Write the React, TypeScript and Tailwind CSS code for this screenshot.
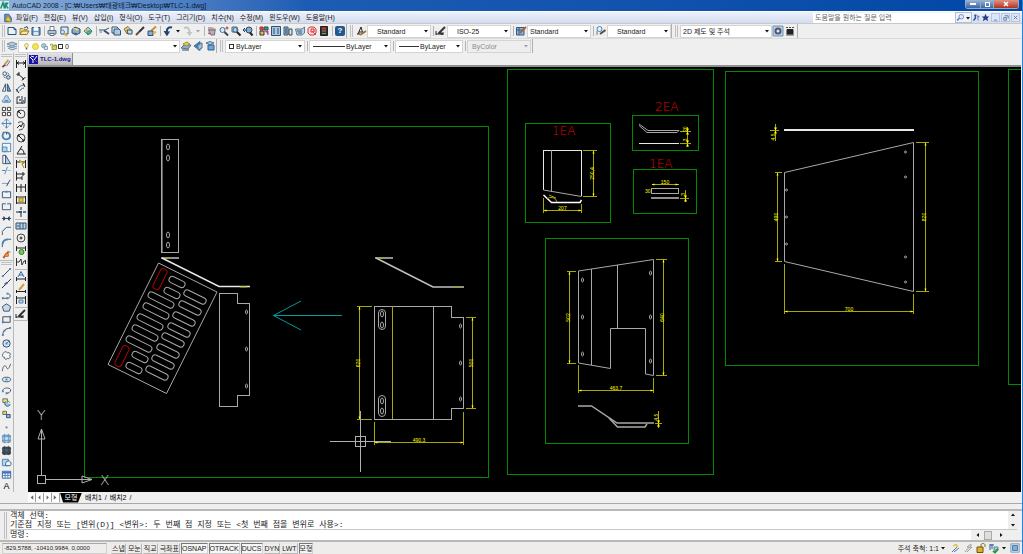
import React from 'react';

const NAVY = '#33506e';
const BLUE = '#4a83b5';
const PALE = '#b9d4ea';
const DARK = '#333333';
const GOLD = '#e0b040';

// Short helper for the small toolbar drawings: path, stroke, fill, stroke width
const p = (d: string, stroke: string = DARK, fill: string = 'none', width: number = 1) => (
  <path key={d + stroke + fill} d={d} stroke={stroke} fill={fill} strokeWidth={width} />
);

const icons: Record<string, React.ReactNode[]> = {
  // Standard toolbar
  New: [p('M2 2.5H8L10 4.5V9.5H2z', NAVY, '#e6f2fb'), p('M8 2.5V4.5H10', NAVY)],
  Open: [p('M2 3.5H5L6 4.5H9V9.5H2z', '#a58a30', '#f5dd7a'), p('M2 9.5L4 6H11L9 9.5z', '#8a7430', '#fbe9a0'), p('M6 3L9 1.5L10 4', NAVY)],
  Save: [p('M2 2.5H10V10H2z', NAVY, '#6c9ccb'), p('M4 2.5H8V5.5H4z', '#dfe9f3', '#ffffff'), p('M4 10V7.5H8V10', '#dfe9f3', '#dfe9f3')],
  Plot: [p('M4 5V1.5H8V5', '#6f7e92', '#fff'), p('M2 5.5H10V9H2z', '#5f6f85', '#b4c2d4'), p('M4 8.5H8V10.5H4z', '#5f6f85', '#fff')],
  Preview: [p('M3 2H10V9H3z', NAVY, '#dcecf8'), p('M2.5 7A2 2 0 1 0 6.500 7A2 2 0 1 0 2.500 7z', '#6a7f9c', '#cfe2f2'), p('M6 8.5L9 11', GOLD, 'none', 2)],
  Publish: [p('M2 4.500L5 2L10 4V8L6 10L2 8z', NAVY, '#7fb0d8'), p('M3 3L7 6L9 4', GOLD, '#f6e28c'), p('M4 8L7 9', '#446')],
  Dwf: [p('M2 6L6 2L10 6L6 10z', BLUE, '#a9d2e6'), p('M5 6H10L8 9H5z', '#3a8a60', '#68b48a'), p('M3 4L6 6', GOLD, 'none', 2)],
  Cut: [p('M1 5H7L11 3', NAVY), p('M6 5.500L11 9', NAVY, 'none', 2), p('M1.500 7H4', '#778')],
  Copy: [p('M2 2H7L8.500 3.500V8H2z', NAVY, '#e6f2fb'), p('M4 4H9L10.500 5.500V10H4z', NAVY, '#a9cbe6')],
  Paste: [p('M2 4L6 1.500L9 5L5 9z', '#8b7638', '#e5cc7c'), p('M5 5H10V9H6z', NAVY, '#c6dff2')],
  Match: [p('M2 10L5 7', '#7a4a20', 'none', 2), p('M5 7L10 2', '#333', 'none', 2)],
  BlockEdit: [p('M5 6L10 1.500', '#d98b2b', 'none', 2), p('M2 6H7V10.500H2z', NAVY, '#88aed0'), p('M7 8L10 7', GOLD, 'none', 2)],
  Undo: [p('M10 2.500C6 1.500 4 4 5 10', '#1d4572', 'none', 2), p('M2 6L5 10.500L7.500 6.500', '#1d4572', '#1d4572')],
  Redo: [p('M2 3C6 1.500 8 4 7.500 9', '#c4c4c4', 'none', 2), p('M5 7L7.500 10.500L10 7', '#c4c4c4', '#c4c4c4')],
  Pan: [p('M3 5V2M5 5V2M7 5V2.500M9 6V3.500', '#a2555d'), p('M2.500 5H9L8.500 10H5z', '#5b7590', '#c9a9a2'), p('M2 8L4 9', '#b33')],
  Zoom: [p('M2 5A2.500 2.500 0 1 0 7 5A2.500 2.500 0 1 0 2 5z', '#456a8e', '#d9ebf8'), p('M6.500 7L10 10.500', '#345', 'none', 2), p('M9 1.500V4.500M7.500 3H10.500', '#a33')],
  ZoomWin: [p('M2 2H7V7H2z', '#456a8e', '#bcd3e8'), p('M3 5A2.500 2.500 0 1 0 8 5A2.500 2.500 0 1 0 3 5z', '#456a8e'), p('M7 7L10.500 10.500', '#222', 'none', 2)],
  ZoomPrev: [p('M4 5A3 3 0 1 0 10 5A3 3 0 1 0 4 5z', '#2e4d70', '#86add0'), p('M8 7.500L10.500 10.500', '#222', 'none', 2), p('M1 5H5M3 3L1 5L3 7', '#1d4572')],
  Props: [p('M2 2H5V5H2z', '#a33', '#d45'), p('M6 2H10V5H6z', '#246', '#5aa04a'), p('M2 6H6V10H2z', '#333', '#d9c050'), p('M7 6H10V10', '#a3a', '#b56ab5')],
  Center: [p('M1.500 1.500H10.500V10.500H1.500z', NAVY, '#a7c7e3'), p('M3 4H5M7 4H9M3 6H5M7 6H9M3 8H5M7 8H9', '#274b73', 'none', 1)],
  Palette: [p('M2 2H6V10H2z', NAVY, '#a7c7e3'), p('M3 4H5M3 6H5M3 8H5', '#234'), p('M7 4H10V10H7z', '#345', '#dbe9f4')],
  Sheet: [p('M1.500 4H8L10.500 2V8L8 10H3z', '#5d7b95', '#b8d3e8'), p('M3 6H8M4 8H8', '#3c586f')],
  Markup: [p('M2 3.500L4 2H8L10 4V8L8 10H4L2 8z', '#d33535', '#fbe0e0'), p('M5 4H8V7H5z', '#c33'), p('M6 6L10 10', '#d44')],
  Calc: [p('M2.500 1.500H9.500V10.500H2.500z', '#222', '#333'), p('M4 3.500H8', '#d33', 'none', 2), p('M4 6H8M4 8.500H8', '#7aa06a')],
  TextStyle: [p('M3 9L6 2L8 9M4 7H7', '#222', 'none', 1), p('M5 10L11 6', '#a4753b', 'none', 2), p('M2 9H5', '#222')],
  DimStyle: [p('M1 10V6M1 9H8M8 10V7', '#222'), p('M4 8L10 2', '#333', 'none', 2), p('M3 8H7V10', '#222', '#444')],
  TableStyle: [p('M1.500 2.500H9V10H1.500z', '#2f5b8e', '#8fb7e0'), p('M1.500 5H9M4 2.500V10', '#2f5b8e'), p('M5 8L11 2', '#a06a2b', 'none', 2)],
  LeaderStyle: [p('M2 4A2 2 0 1 0 7 4A2 2 0 1 0 2 4z', BLUE, '#e7f3fb'), p('M2 10V6', BLUE), p('M5 9L10.500 5', '#5b4a34', 'none', 2)],
  Gear: [p('M1 1H11V11H1z', '#6a93bb', '#b6d0e8'), p('M3.500 6A2.500 2.500 0 1 0 8.500 6A2.500 2.500 0 1 0 3.500 6z', '#556', '#dfe6ec', 2)],
  Workspace: [p('M2 2.500H4M5 2.500H7M8 2.500H10M2 10H10', '#555'), p('M3 4.500H9V9H3z', '#222', '#222')],
  // Layers
  Layers: [p('M1 4L6 2L11 4L6 6z', '#7790a8', '#b6cfe3'), p('M1 6L6 8L11 6', '#7790a8', '#9db9d0'), p('M2 8L6 10L11 8', '#7790a8', '#d0e0ec')],
  LayerPrev: [p('M1 8L4 5H11L8 9z', '#53738f', '#8fb0cb'), p('M3 4L7 2L10 4L6 6z', '#a89030', '#e6cd5c'), p('M2 10H9', NAVY)],
  LayerState: [p('M2 6L8 1.500V10.500z', '#3f6d94', '#4d7ea8'), p('M6 5L10 3V8L6 10z', '#53738f', '#a9c8e0')],
  LayerMatch: [p('M2 3L6 1.500L10 3L6 5z', '#53738f', '#a9c8e0'), p('M4 5H10V10H4z', '#2f6096', '#6fa5d5')],
  Bulb: [p('M3.500 4.500A2.500 2.500 0 1 1 8.500 4.500L7 7.500H5z', '#b09a3d', '#fff2a0'), p('M5 9H7', '#666', 'none', 2)],
  Sun: [p('M2 6A4 4 0 1 0 10 6A4 4 0 1 0 2 6z', '#c7b530', '#f4e650')],
  SunVp: [p('M2 5A3 3 0 1 0 8 5A3 3 0 1 0 2 5z', '#6c95a8', '#a9c9cf'), p('M6 6H10V10H6z', '#6c8aa0', '#dbe6ee')],
  LockYellow: [p('M2 5V3H5V5', '#8a8420'), p('M4 5H10V10H4z', '#8a8420', '#dcd84a'), p('M7 4H10V7', '#6a7f30')],
  // Modify
  Erase: [p('M1.500 10L5 7', '#8b3a3a', 'none', 2), p('M4 7L8 2', '#c8a050', 'none', 2), p('M6 9L10 3', '#3a6fa0', 'none', 1)],
  CopyObj: [p('M2 4A2 2 0 1 0 6 4A2 2 0 1 0 2 4z', NAVY), p('M6 8A2 2 0 1 0 10 8A2 2 0 1 0 6 8z', NAVY, PALE), p('M7 3L9 5M3 7L5 9', NAVY)],
  Mirror: [p('M5 2V10H1.500z', NAVY, '#fff'), p('M7 2V10H10.500z', NAVY, '#6f9fca')],
  Offset: [p('M2 9C0 6 4 6 4 4C4 1 8 1 8 4C8 6 12 6 10 9z', BLUE, PALE), p('M4 7.500H8', NAVY)],
  Array: [p('M1.500 1.500H5V5H1.500zM7 1.500H10.500V5H7zM1.500 7H5V10.500H1.500zM7 7H10.500V10.500H7z', DARK, '#fff')],
  Move: [p('M6 1V11M1 6H11', BLUE, 'none', 1), p('M4 3L6 1L8 3M4 9L6 11L8 9M3 4L1 6L3 8M9 4L11 6L9 8', BLUE)],
  Rotate: [p('M3 3C0 7 3 11 7 10C11 9 11 3 6 2.500', BLUE, 'none', 2), p('M2 2.500H6V5', NAVY)],
  Scale: [p('M1.500 1.500H10.500V10.500H1.500z', BLUE, '#eef6fc'), p('M1.500 5.500H6.500V10.500H1.500z', BLUE, PALE)],
  Stretch: [p('M2 1.500H5V10.500H2z', NAVY, '#fff'), p('M5 1.500L10.500 10.500H5z', NAVY, PALE)],
  Trim: [p('M1 6H5', BLUE), p('M7 6H11', '#8bb', 'none', 1), p('M4 10L7 2', '#5b87b0')],
  Extend: [p('M1 7H7', '#6a9ccc'), p('M7 7H8M6 10L10 3', '#345')],
  Break1: [p('M1.500 3H10.500V9.500H1.500z', NAVY, '#eef3f8'), p('M5 3H7', BLUE, 'none', 2)],
  Break2: [p('M4 3H1.500V9.500H10.500V3H8', NAVY), p('M4 3H5M7 3H8', BLUE, 'none', 2)],
  Join: [p('M1 6H11', '#345'), p('M3 4L5 6L3 8zM9 4L7 6L9 8z', '#345', '#345')],
  Chamfer: [p('M1.500 11V7L6 2.500H11', '#456'), p('M1.500 7L6 2.500', BLUE, 'none', 1)],
  Fillet: [p('M1.500 11V8C2 4 4 2.500 8 2.500H11', NAVY, 'none', 1), p('M1.500 8C2 4 4 2.500 8 2.500', BLUE, 'none', 2)],
  Explode: [p('M3 9L8 3', '#d33', 'none', 2), p('M5 5H8V8H4z', '#c60', '#f5a050'), p('M8 2L10 4M2 9L4 10', '#555')],
  // Draw
  Line: [p('M2 10L10 2', '#345'), p('M1 9H3V11H1zM9 1H11V3H9z', BLUE, BLUE, 0)],
  XLine: [p('M1 11L11 1', '#222'), p('M4 7L7 5', '#36a', 'none', 2)],
  PLine: [p('M2 9H7C11 9 11 4 7 4', '#456', 'none', 1), p('M1 8H3V10H1zM6 3H8V5H6zM6 8H8V10H6z', BLUE, BLUE, 0)],
  Polygon: [p('M6 2L10.500 5L9 10H3L1.500 5z', NAVY, '#c9d9e8')],
  Rect: [p('M2 3H10V9H2z', '#345', '#eee'), p('M1 8H3V10H1zM9 2H11V4H9z', BLUE, BLUE, 0)],
  Arc: [p('M2 10C2 5 5 2.500 10 2.500', '#345'), p('M1 9H3V11H1zM9 1H11V3H9zM3 4H5V6H3z', BLUE, BLUE, 0)],
  Circle: [p('M2 6A4 4 0 1 0 10 6A4 4 0 1 0 2 6z', '#2a4a70', '#cfe0f0'), p('M6 6L9 3', BLUE), p('M5 5H7V7H5z', BLUE, BLUE, 0)],
  RevCloud: [p('M3 3C4 1 6 2 7 3C10 2 11 5 9.500 6C11 9 8 10 7 9C6 11 3 10 4 8C1 8 1 5 3 3z', '#456', '#f6f6f6')],
  Spline: [p('M1.500 10C2 3 5 3 6 6C7 9 9 7 10.500 2', '#555')],
  Ellipse: [p('M1.500 6A4.500 2.500 0 1 0 10.500 6A4.500 2.500 0 1 0 1.500 6z', '#356', '#d7e5f0'), p('M5 5H7V7H5z', BLUE, BLUE, 0)],
  EllipseArc: [p('M2 7C1 3 9 2 10.500 5C11 8 8 9 6 9', '#456'), p('M1 6H3V8H1zM5 8H7V10H5z', BLUE, BLUE, 0)],
  Insert: [p('M2 2H7V6H2z', '#667', '#e8e070'), p('M5 5A3 3 0 1 0 10 8', NAVY, '#9ec4e2'), p('M7 4L10 6', '#3a3')],
  MakeBlock: [p('M2 2.500H6V6H2z', '#665', '#e0d860'), p('M6 6H10V9.500H6z', NAVY, '#8fb7da')],
  Point: [p('M5 6H7V8H5z', BLUE, BLUE, 0)],
  Hatch: [p('M2 2.500H10V10H2z', BLUE, '#cfe4f5'), p('M1 4H11M1 8H11M4 1V11M8 1V11', '#5f93c0')],
  Gradient: [p('M2 2.500H10V10H2z', '#222', '#4b5f73'), p('M1 4H11M1 8H11M4 1V11M8 1V11', '#3a4550')],
  Region: [p('M1.500 2.500H8V9.500H1.500z', BLUE, PALE), p('M5 7A3 3 0 1 1 10 9.500H5z', '#2e5f90', '#e7f2fb')],
  Table: [p('M1.500 2.500H10.500V10H1.500z', '#2f5b9e', '#fff'), p('M1.500 4H10.500', '#3f78c0', 'none', 2), p('M1.500 7H10.500M4.500 4V10M7.500 4V10', '#4c80c0')],
  // Dimension
  DimLinear: [p('M1.500 2V10M10.500 2V10', '#222'), p('M2 5H10M4 3.500L2 5L4 6.500M8 3.500L10 5L8 6.500', '#222')],
  DimAligned: [p('M3 4L9 9M1.500 5L4.500 2M7 10.500L10.500 7', '#222', 'none', 1), p('M3 4H5M3 4V6M9 9H7', '#222')],
  DimArc: [p('M2 10C2 6 5 3 10 3', '#2a6da8', 'none', 1), p('M1 7L4 11M8 1L10 5', '#222'), p('M5 9C5 8 7 6 9 6', '#555')],
  DimOrd: [p('M2 10V3M2 3H5M7 2V10M10 3V9', '#333'), p('M4 5H6V7H4zM8 6H10V8H8z', BLUE, BLUE, 0), p('M2 9H10', '#333')],
  DimRadius: [p('M2 6A4 4 0 1 0 10 6A4 4 0 1 0 2 6z', '#444'), p('M6 6L3 3M3 5V3H5', '#222')],
  DimJog: [p('M3 3C6 0 10 3 9 6C9 9 6 10 4 10', '#444'), p('M2 8L5 5L6 7L8 3', '#222')],
  DimDia: [p('M2 6A4 4 0 1 0 10 6A4 4 0 1 0 2 6z', '#444'), p('M3 3L9 9M3 5V3H5M9 7V9H7', '#222')],
  DimAngular: [p('M7 2L2 10H11', '#222'), p('M5 5C8 5 9 7 9 10', '#222')],
  QDim: [p('M1.500 2V10M10.500 2V10M2 4H10', '#222'), p('M4 2L9 5L7 6L9 10', '#998a10', '#e9df30')],
  DimBase: [p('M1.500 1.500V10.500M1.500 4H10M8 2V6M1.500 8H7M7 6V10', '#222')],
  DimCont: [p('M1.500 2V10M6 2V10M10.500 2V10M1.500 5H10.500', '#222')],
  DimSpace: [p('M1.500 2V10M10.500 2V10M2 3H10M2 9H10', '#222'), p('M4 4H8V8H4z', '#a08820', '#e5c34a')],
  DimBreak: [p('M6 1V4M6 7V11M1 6H4', '#222'), p('M8 6H11', BLUE, 'none', 2), p('M4 5H7V7H4z', '#357', '#357', 0)],
  Tol: [p('M1 3H11V9H1z', NAVY, PALE), p('M5 3V9M8 3V9M2 6H4', NAVY)],
  CenterMark: [p('M2 6A4 4 0 1 0 10 6A4 4 0 1 0 2 6z', '#444'), p('M6 4.500V7.500M4.500 6H7.500', '#222')],
  Inspect: [p('M1.500 2V7M10.500 2V7M2 4H10', '#222'), p('M4 8A2.500 2.500 0 1 0 9 8A2.500 2.500 0 1 0 4 8z', '#2c8020', '#7cc850')],
  JogLine: [p('M1.500 2V10M1.500 6H4L6 3L7 9L9 5H10.500M10.500 4V8', '#333')],
  DimEdit: [p('M3 7L6 1.500L9 7M4 5H8', '#2c6aa6', 'none', 1), p('M1.500 7V11M10.500 7V11M2 9H10', '#222')],
  DimTEdit: [p('M1.500 8V11M10.500 8V11M2 9.500H10', '#222'), p('M4 8L9 2', '#d5a030', 'none', 2)],
  DimUpdate: [p('M1.500 2V10M10.500 2V10M2 4H10', '#222'), p('M4 6H8V9H4z', BLUE, PALE)],
  // Status bar
  AnnoVis: [p('M3 10L9 4M5 10L10 6', '#5279a0', 'none', 1), p('M4 4L7 2L9 5', '#d5b93a', '#f0dc62')],
  AnnoAuto: [p('M3 10L9 3M5 10L10 5', '#9a9a9a', 'none', 1), p('M5 5L9 2V6z', '#aaa', '#ccc')],
  Padlock: [p('M6 5V3C6 1 10 1 10 3V5', '#8a6a10', 'none', 1), p('M2 5H8V10.500H2z', '#6b5210', '#e0b02e')],
  Tray: [p('M2 2V8M4 2V7M2 3H6', '#2e5f90'), p('M6 5H10V8H6z', BLUE, PALE), p('M5 9L7 10.500L10 7', '#2a9a30', 'none', 2)],
  CleanScreen: [p('M1 1H11V11H1z', '#6b8db0', '#dceaf6'), p('M3 3H9V9H3z', '#3c6f9f', '#7fb0dc')],
  Search: [p('M4 5A3 3 0 1 0 10 5A3 3 0 1 0 4 5z', '#5272ab', '#e4edfa'), p('M4.500 7L1.500 10', '#5272ab', 'none', 2)],
  Comm: [p('M3 3H6M4.500 2V7L2 10', '#2c4fa0', 'none', 2), p('M7 5H10M8 3V10', '#3a5fb5')],
  Star: [p('M6 1L7.500 4.500H11L8.500 7L9.500 11L6 8.500L2.500 11L3.500 7L1 4.500H4.500z', '#1f3c88', '#1f3c88', 0)],
  Sketch: [p('M2 1.500H7L10 6V10.500H2z', '#2f5f8f', '#5b93c4'), p('M3 9L6 3L10 10.500z', '#b08818', '#f0cc3a')],
};

const Icon = ({ name, className = 'size-3' }: { name: string; className?: string }) => (
  <svg viewBox="0 0 12 12" className={`${className} shrink-0`} aria-hidden="true">
    {icons[name]}
  </svg>
);

const ToolButton = ({ name }: { name: string }) => (
  <button type="button" aria-label={name} className="flex size-3 shrink-0 items-center justify-center">
    <Icon name={name} />
  </button>
);

const Sep = () => (
  <div className="flex h-full w-1 shrink-0 justify-center py-0.5">
    <div className="w-px bg-[#b4b4b4]" />
  </div>
);

const Grip = ({ wide = false }: { wide?: boolean }) => (
  <div className={`flex h-full shrink-0 justify-center gap-px py-px ${wide ? 'w-[9px] border-l border-[#b0b0b0]' : 'w-1.5'}`}>
    <div className="w-px bg-[#c0c0c0]" />
    <div className="w-px bg-[#c0c0c0]" />
  </div>
);

const Caret = ({ dim = false }: { dim?: boolean }) => (
  <svg viewBox="0 0 6 6" className="size-1.5 shrink-0" aria-hidden="true">
    <path d="M1 2H5L3 4.500z" fill={dim ? '#a0a0a0' : '#111111'} />
  </svg>
);

interface ComboProps {
  label: string;
  value: string;
  className: string;
  disabled?: boolean;
  children?: React.ReactNode;
}

const Combo: React.FC<ComboProps> = ({ label, value, className, disabled, children }) => (
  <div className="relative flex h-[13px] shrink-0 items-center">
    <select
      aria-label={label}
      disabled={disabled}
      className={`h-[13px] appearance-none border border-[#d4d4d4] text-[7px] leading-[11px] ${
        disabled ? 'bg-[#eeeeee] text-[#8c8c8c]' : 'bg-white text-[#222222]'
      } ${className}`}
    >
      <option>{value}</option>
    </select>
    <div className="pointer-events-none absolute inset-y-0 left-1 flex items-center">{children}</div>
    <div className="pointer-events-none absolute inset-y-0 right-0.5 flex items-center">
      <Caret dim={disabled} />
    </div>
  </div>
);

const menus = ['파일(F)', '편집(E)', '뷰(V)', '삽입(I)', '형식(O)', '도구(T)', '그리기(D)', '치수(N)', '수정(M)', '윈도우(W)', '도움말(H)'];

const standardTools = [
  ['New', 'Open', 'Save'],
  ['Plot', 'Preview', 'Publish', 'Dwf'],
  ['Cut', 'Copy', 'Paste', 'Match', 'BlockEdit'],
];
const viewTools = [
  ['Pan', 'Zoom', 'ZoomWin', 'ZoomPrev'],
  ['Props', 'Center', 'Palette', 'Sheet', 'Markup', 'Calc'],
];
const modifyTools = ['Erase', 'CopyObj', 'Mirror', 'Offset', 'Array', 'Move', 'Rotate', 'Scale', 'Stretch', 'Trim', 'Extend', 'Break1', 'Break2', 'Join', 'Chamfer', 'Fillet', 'Explode'];
const drawTools = ['Line', 'XLine', 'PLine', 'Polygon', 'Rect', 'Arc', 'Circle', 'RevCloud', 'Spline', 'Ellipse', 'EllipseArc', 'Insert', 'MakeBlock', 'Point', 'Hatch', 'Gradient', 'Region', 'Table'];
const dimTools = [
  ['DimLinear', 'DimAligned', 'DimArc', 'DimOrd'],
  ['DimRadius', 'DimJog', 'DimDia', 'DimAngular'],
  ['QDim', 'DimBase', 'DimCont', 'DimSpace', 'DimBreak'],
  ['Tol', 'CenterMark', 'Inspect', 'JogLine'],
  ['DimEdit', 'DimTEdit', 'DimUpdate'],
  ['DimStyle'],
];

const TitleBar = () => (
  <div className="flex h-[11px] shrink-0 items-center bg-linear-to-r from-[#8db0da] via-[#1d5cb4] via-30% to-[#0147a6]">
    <svg viewBox="0 0 12 12" className="size-[9px] shrink-0" aria-hidden="true">
      <rect width="12" height="12" fill="#d7efe9" />
      <path d="M1 10L4 2L6 10M7 2V10M7 3H10L8 6L11 10" stroke="#1f8f7a" strokeWidth="2" fill="none" />
    </svg>
    <h1 className="ml-[3px] text-[7px] leading-[10px] whitespace-nowrap text-[#0c1c30]">
      AutoCAD 2008 - [C:₩Users₩태광테크₩Desktop₩TLC-1.dwg]
    </h1>
    <div className="mr-[3px] ml-auto flex h-[9px] self-start overflow-hidden rounded-b-[3px] border border-t-0 border-[#8fa9cc]">
      <button type="button" aria-label="최소화" className="flex w-3.5 items-center justify-center bg-linear-to-b from-[#9fb6d4] to-[#3a66a5]">
        <span className="h-0.5 w-1.5 bg-white" />
      </button>
      <button type="button" aria-label="이전 크기로" className="flex w-3.5 items-center justify-center border-x border-[#8fa9cc] bg-linear-to-b from-[#9fb6d4] to-[#3a66a5]">
        <span className="size-[5px] border border-white" />
      </button>
      <button type="button" aria-label="닫기" className="flex w-6 items-center justify-center bg-linear-to-b from-[#dd9285] to-[#b52a17]">
        <svg viewBox="0 0 6 6" className="size-1.5">
          <path d="M1 1L5 5M5 1L1 5" stroke="#ffffff" strokeWidth="1.5" />
        </svg>
      </button>
    </div>
  </div>
);

const MenuBar = () => (
  <div className="flex h-3 shrink-0 items-center border-t border-white bg-linear-to-b from-[#eef1fa] to-[#d3dcef]">
    <div className="flex w-4 justify-center">
      <Icon name="Sketch" className="size-2.5" />
    </div>
    <nav className="flex gap-1.5">
      {menus.map((menu) => (
        <button key={menu} type="button" className="text-[7px] leading-[10px] whitespace-nowrap text-[#222222]">
          {menu}
        </button>
      ))}
    </nav>
    <div className="ml-auto flex h-full items-center">
      <input
        type="text"
        aria-label="도움말 검색"
        placeholder="도움말을 원하는 질문 입력"
        className="h-2.5 w-[142px] bg-white px-0.5 text-[7px] leading-[10px] placeholder:text-[#666666]"
      />
      <div className="flex items-center border border-[#b5bfd2] bg-[#eef2fb]">
        <Icon name="Search" className="size-[9px]" />
        <Caret />
      </div>
      <div className="flex">
        <Icon name="Comm" className="size-[9px]" />
        <Icon name="Star" className="size-[9px]" />
      </div>
      <div className="ml-px flex gap-px pr-0.5">
        {['M2 7H6', 'M2 4H5V7H2zM3 2H7V5', 'M2 2L6 6M6 2L2 6'].map((d) => (
          <button key={d} type="button" aria-label="문서 창" className="border border-[#b5c6e0] bg-[#dce8f8]">
            <svg viewBox="0 0 8 8" className="size-[7px]">
              <path d={d} stroke="#5b7598" fill="none" />
            </svg>
          </button>
        ))}
      </div>
    </div>
  </div>
);

const StandardBar = () => (
  <div className="flex h-[15px] shrink-0 items-center border-t border-[#c8c8c8]">
    <Grip />
    {standardTools.map((group) => (
      <React.Fragment key={group[0]}>
        {group.map((name) => <ToolButton key={name} name={name} />)}
        <Sep />
      </React.Fragment>
    ))}
    <ToolButton name="Undo" />
    <div className="flex w-2 justify-center"><Caret /></div>
    <ToolButton name="Redo" />
    <div className="flex w-2 justify-center"><Caret dim /></div>
    {viewTools.map((group) => (
      <React.Fragment key={group[0]}>
        <Sep />
        {group.map((name) => <ToolButton key={name} name={name} />)}
      </React.Fragment>
    ))}
    <Sep />
    <button type="button" className="mx-px flex size-2.5 shrink-0 items-center justify-center rounded-xs bg-[#24598f] text-[8px] leading-[10px] font-bold text-white">
      ?
    </button>
    <Grip wide />
    <ToolButton name="TextStyle" />
    <Combo label="문자 스타일" value="Standard" className="w-16 pl-[9px]" />
    <Sep />
    <ToolButton name="DimStyle" />
    <Combo label="치수 스타일" value="ISO-25" className="w-16 pl-[9px]" />
    <Sep />
    <ToolButton name="TableStyle" />
    <Combo label="테이블 스타일" value="Standard" className="w-16 pl-0.5" />
    <Sep />
    <ToolButton name="LeaderStyle" />
    <Combo label="다중 지시선 스타일" value="Standard" className="w-16 pl-[9px]" />
    <Grip wide />
    <Combo label="작업공간" value="2D 제도 및 주석" className="w-[92px] pl-0.5" />
    <ToolButton name="Gear" />
    <ToolButton name="Workspace" />
    <div className="h-full w-0.5 border-r border-[#b0b0b0]" />
  </div>
);

const LayerBar = () => (
  <div className="flex h-[15px] shrink-0 items-center border-t border-[#dadada]">
    <Grip />
    <ToolButton name="Layers" />
    <Combo label="도면층" value="0" className="w-[162px] pl-[46px]">
      {['Bulb', 'Sun', 'SunVp', 'LockYellow'].map((name) => (
        <Icon key={name} name={name} className="size-[9px]" />
      ))}
      <span className="size-[5px] border border-[#333333]" />
    </Combo>
    {['LayerPrev', 'LayerState', 'LayerMatch'].map((name) => <ToolButton key={name} name={name} />)}
    <Grip wide />
    <Combo label="색상" value="ByLayer" className="w-20 pl-[10px]">
      <span className="size-[5px] border border-[#333333]" />
    </Combo>
    <Sep />
    <Combo label="선종류" value="ByLayer" className="w-[82px] pl-9">
      <span className="h-px w-8 bg-[#333333]" />
    </Combo>
    <Sep />
    <Combo label="선가중치" value="ByLayer" className="w-[68px] pl-6">
      <span className="h-px w-5 bg-[#333333]" />
    </Combo>
    <Sep />
    <Combo label="플롯 스타일" value="ByColor" className="w-16 pl-1" disabled />
    <div className="h-full w-0.5 border-r border-[#b0b0b0]" />
  </div>
);

const FlatGrip = () => (
  <div className="flex h-[5px] w-full shrink-0 flex-col justify-center gap-px px-px">
    <div className="h-px bg-[#c0c0c0]" />
    <div className="h-px bg-[#c0c0c0]" />
  </div>
);

const SideBars = () => (
  <div className="flex shrink-0 items-stretch">
    <div className="mb-[11px] flex w-3.5 flex-col items-center border-r border-[#b8b8b8]">
      <FlatGrip />
      <div className="flex flex-[17] flex-col justify-around">
        {modifyTools.map((name) => (
          <button key={name} type="button" aria-label={name} className="flex flex-1 basis-0 items-center overflow-hidden">
            <Icon name={name} className="size-[11px]" />
          </button>
        ))}
      </div>
      <div className="h-px w-full bg-[#b8b8b8]" />
      <FlatGrip />
      <div className="flex flex-[19] flex-col justify-around">
        {drawTools.map((name) => (
          <button key={name} type="button" aria-label={name} className="flex flex-1 basis-0 items-center overflow-hidden">
            <Icon name={name} className="size-[11px]" />
          </button>
        ))}
        <button type="button" className="flex flex-1 basis-0 items-center justify-center text-[9px] leading-[11px] text-black">A</button>
      </div>
    </div>
    <div className="flex w-3.5 flex-col items-center self-start border-r border-b border-[#b8b8b8]">
      <FlatGrip />
      {dimTools.map((group, i) => (
        <div key={group[0]} className={i > 0 ? 'mt-px border-t border-[#b8b8b8]' : ''}>
          {group.map((name) => <ToolButton key={name} name={name} />)}
        </div>
      ))}
    </div>
  </div>
);

// ---- Model space ----

const GREEN = '#008a00';
const YELLOW = '#a8a800';
const GRAY = '#a8a8a8';

const frames = [
  [84.5, 126.5, 404, 351],
  [507.5, 69.5, 206, 405],
  [525.5, 123.5, 85, 99],
  [632.5, 115.5, 66, 35],
  [633.5, 169.5, 63, 44],
  [545.5, 238.5, 143, 205],
  [725.5, 71.5, 253, 294],
  [1008.5, 69.5, 60, 315],
];

// centre x, centre y, length
const ventSlots = [
  [177, 282, 17], [172, 293, 17],
  [161, 300, 28], [156, 311, 28], [150, 322, 28], [145, 333, 28], [139, 344, 28],
  [140, 357, 17], [134, 368, 17],
  [195, 297, 24], [190, 308, 24], [184, 319, 24], [179, 330, 24], [173, 340, 24], [168, 351, 24], [163, 362, 24], [157, 373, 24],
];

const holes = [
  [246, 312], [246, 349], [246, 386],
  [460, 326], [460, 363], [460, 399],
  [582, 280], [582, 317], [582, 354],
  [650, 273], [650, 317], [650, 361],
];

const tallHoles = [
  [168, 147], [168, 158], [168, 235], [168, 245],
  [382, 314], [382, 325], [382, 401], [382, 411],
];

const pins = [
  [786, 190], [786, 217], [786, 244],
  [905, 152], [905, 177], [905, 257], [905, 282],
];

// Dimension line between two points with extension lines reaching back to the part
const DimV = ({ x, y1, y2, from, label }: { x: number; y1: number; y2: number; from: number; label: string }) => {
  const over = from > x ? -3 : 3;
  return (
    <g>
      <path d={`M${x} ${y1}V${y2}M${from} ${y1}H${x + over}M${from} ${y2}H${x + over}`} stroke={YELLOW} fill="none" shapeRendering="crispEdges" />
      <path d={`M${x - 1} ${y1 + 3}L${x} ${y1}L${x + 1} ${y1 + 3}zM${x - 1} ${y2 - 3}L${x} ${y2}L${x + 1} ${y2 - 3}z`} fill="#ffff00" />
      <text transform={`translate(${x} ${(y1 + y2) / 2}) rotate(-90)`} textAnchor="middle" className="fill-[#ffff00] text-[5px]">{label}</text>
    </g>
  );
};

const DimH = ({ y, x1, x2, from1, from2, label }: { y: number; x1: number; x2: number; from1: number; from2: number; label: string }) => (
  <g>
    <path d={`M${x1} ${y}H${x2}M${x1} ${from1}V${y + 2}M${x2} ${from2}V${y + 2}`} stroke={YELLOW} fill="none" shapeRendering="crispEdges" />
    <path d={`M${x1 + 3} ${y - 1}L${x1} ${y}L${x1 + 3} ${y + 1}zM${x2 - 3} ${y - 1}L${x2} ${y}L${x2 - 3} ${y + 1}z`} fill="#ffff00" />
    <text x={(x1 + x2) / 2} y={y - 1} textAnchor="middle" className="fill-[#ffff00] text-[5px]">{label}</text>
  </g>
);

// Thickness mark beside a plate seen edge on
const ThickMark = ({ x, y, from, top, bottom, label }: { x: number; y: number; from: number; top: number; bottom: number; label: string }) => (
  <g>
    <path d={`M${from} ${y}H${x + 3}M${x} ${top}V${bottom}`} stroke={YELLOW} fill="none" shapeRendering="crispEdges" />
    <path d={`M${x - 1.5} ${y - 3}H${x + 1.5}L${x} ${y}zM${x - 1.5} ${y + 3}H${x + 1.5}L${x} ${y}z`} fill="#ffff00" />
    <text transform={`translate(${x - 1} ${(top + y) / 2}) rotate(-90)`} textAnchor="middle" className="fill-[#ffff00] text-[5px]">{label}</text>
  </g>
);

const ModelSpace = () => (
  <svg className="block h-full w-full bg-black" role="img" aria-label="TLC-1.dwg">
    <g transform="translate(-28 -67)" fill="none" stroke={GRAY} strokeWidth="1">
      <g stroke={GREEN} shapeRendering="crispEdges">
        {frames.map(([x, y, w, h]) => <rect key={`${x}-${y}`} x={x} y={y} width={w} height={h} />)}
      </g>

      {/* Perforated cover, left view */}
      <path d="M161.500 139.500H178.500V252.500H161.500z" shapeRendering="crispEdges" />
      <path d="M162.500 140V252" stroke="#606060" shapeRendering="crispEdges" />
      <path d="M161 258H179" strokeWidth="2" stroke="#909090" />
      <path d="M162 258L219 286.500H250" stroke="#e8e8e8" strokeWidth="1.500" />
      <path d="M166 258H170M240 287H247" stroke={YELLOW} />
      <path d="M158.500 263L217 292L166.500 393.500L108 364.500z" />
      {ventSlots.map(([x, y, len]) => (
        <rect key={`${x}-${y}`} x={-len / 2} y={-3.25} width={len} height={6.5} rx={3.25} transform={`translate(${x} ${y}) rotate(26.400)`} />
      ))}
      <g stroke="#b40000">
        <rect x="-11" y="-3.500" width="22" height="7" rx="3" transform="translate(160 279) rotate(116.400)" />
        <rect x="-11" y="-3.500" width="22" height="7" rx="3" transform="translate(122 356) rotate(116.400)" />
      </g>
      <path d="M219.500 293.500H237.500V303.500H249.500V395.500H237.500V406.500H219.500z" shapeRendering="crispEdges" />
      <path d="M273.500 315.500H342M301 301L273.500 315.500L301 330" stroke="#009a9a" />

      {/* Same cover, front view */}
      <path d="M375 258H393" strokeWidth="2" stroke="#909090" />
      <path d="M376 258L433 287H464" stroke="#c0c0c0" strokeWidth="1.500" />
      <path d="M379 258H384M454 287H461" stroke={YELLOW} />
      <path d="M374.500 306.500H451.500V317.500H463.500V408.500H451.500V419.500H374.500zM433.500 306V419" shapeRendering="crispEdges" />
      <path d="M392.500 306V419" stroke={YELLOW} shapeRendering="crispEdges" />
      <rect x="378.500" y="309.500" width="7" height="20" rx="3.500" />
      <rect x="378.500" y="395.500" width="7" height="21" rx="3.500" />
      {tallHoles.map(([x, y]) => <ellipse key={`${x}-${y}`} cx={x} cy={y} rx="1.500" ry="3" />)}
      {holes.map(([x, y]) => <ellipse key={`${x}-${y}`} cx={x + 0.5} cy={y} rx="1" ry="2" />)}
      {pins.map(([x, y]) => <circle key={`${x}-${y}`} cx={x + 0.5} cy={y} r="1" />)}

      {/* 1EA bent plate */}
      <path d="M543.500 190V150.500H581.500V196" stroke="#e8e8e8" shapeRendering="crispEdges" />
      <path d="M543.500 190L581.500 196.500M551.500 150V192" />
      <path d="M543.500 195L551.500 202.500H580L581.500 200" stroke="#ffffff" strokeWidth="1.500" />
      <path d="M547 199A6 6 0 0 1 557 202M549 195L556 198" stroke={YELLOW} />

      {/* 2EA and 1EA strips */}
      <path d="M639 124L648 130.500H679L677 132.500H647L639 125.500" />
      <path d="M639 143.500H679" stroke="#e8e8e8" shapeRendering="crispEdges" />
      <path d="M651.500 188.500H678.500V193.500H651.500z" shapeRendering="crispEdges" />
      <path d="M651 198H679" strokeWidth="2" stroke="#909090" />

      {/* Notched side plate */}
      <path d="M578.500 271L653.500 259.500V375.500L645.500 374V328.500H610.500V368.500L578.500 363z" />
      <path d="M591.500 269V365M617.500 265V328" />
      <path d="M578 406H591.500L617 423H654" strokeWidth="1.500" />
      <path d="M609 418L617.500 427H645L647 424" strokeWidth="1.500" />

      {/* Trapezoid plate */}
      <path d="M784 130H914" stroke="#e8e8e8" strokeWidth="2" />
      <path d="M784.500 172.500L913.500 142.500V291.500L784.500 261.500z" />

      {/* Dimensions */}
      <g stroke="none">
        <DimV x={359.5} y1={306.5} y2={419.5} from={372} label="620" />
        <DimV x={472.5} y1={317.5} y2={408.5} from={466} label="500" />
        <DimH y={442.5} x1={374.5} x2={463.5} from1={422} from2={412} label="490,3" />
        <DimV x={593.5} y1={150.5} y2={196.5} from={583} label="250,4" />
        <DimH y={210.5} x1={543.5} x2={581.5} from1={198} from2={204} label="207" />
        <DimH y={184.5} x1={651.5} x2={678.5} from1={187} from2={187} label="150" />
        <text x="645" y="193" className="fill-[#ffff00] text-[5px]">30</text>
        <ThickMark x={687.5} y={131.5} from={680} top={127} bottom={136} label="20" />
        <ThickMark x={687.5} y={143.5} from={680} top={136} bottom={147} label="3" />
        <ThickMark x={685.5} y={198.5} from={680} top={190} bottom={202} label="3" />
        <DimV x={569.5} y1={271.5} y2={363.5} from={576} label="502" />
        <DimV x={663.5} y1={259.5} y2={375.5} from={656} label="640" />
        <DimH y={390.5} x1={578.5} x2={653.5} from1={365} from2={378} label="463,7" />
        <ThickMark x={658.5} y={423.5} from={655} top={411} bottom={428} label="4,5" />
        <ThickMark x={775.5} y={130.5} from={770} top={124} bottom={141} label="" />
        <text transform="translate(775 137) rotate(-90)" textAnchor="middle" className="fill-[#ffff00] text-[5px]">4,5</text>
        <DimV x={777.5} y1={172.5} y2={261.5} from={782} label="490" />
        <DimV x={925.5} y1={142.5} y2={291.5} from={916} label="820" />
        <DimH y={311.5} x1={784.5} x2={913.5} from1={264} from2={294} label="700" />
      </g>

      <g stroke="none" className="fill-[#e00000] font-['DejaVu_Sans'] text-[12px] font-extralight">
        <text x="552" y="135">1EA</text>
        <text x="655" y="111">2EA</text>
        <text x="649" y="168">1EA</text>
      </g>

      {/* Crosshair and UCS icon */}
      <g stroke="#b0b0b0" shapeRendering="crispEdges">
        <path d="M330 441.500H391M360.500 411V472M355.500 436.500H365.500V446.500H355.500z" />
        <path d="M37.500 475.500H45.500V483.500H37.500zM41.500 475V439M46 479.500H82" />
      </g>
      <path d="M41.500 429L45 439H38zM41.500 429V439M92 479.500L82 476V483zM82 479.500H92" stroke="#b0b0b0" />
      <g stroke="none" className="fill-[#d0d0d0] font-['DejaVu_Sans'] text-[14px] font-extralight">
        <text x="37" y="420">Y</text>
        <text x="100" y="485">X</text>
      </g>
    </g>
  </svg>
);

const LayoutTabs = () => (
  <div className="flex h-[11px] shrink-0 items-center text-[7px] leading-[9px]">
    <div className="flex h-[9px] bg-white">
      {['M2 2V7M6 2L3 4.500L6 7z', 'M5 2L2.500 4.500L5 7z', 'M3 2L5.500 4.500L3 7z', 'M6 2V7M2 2L5 4.500L2 7z'].map((d) => (
        <button key={d} type="button" aria-label="탭 이동" className="border-r border-[#a0a0a0]">
          <svg viewBox="0 0 8 9" className="h-[9px] w-[7px]">
            <path d={d} fill="#666666" />
          </svg>
        </button>
      ))}
    </div>
    <button type="button" className="relative flex h-[10px] w-[22px] items-center justify-center bg-black text-white [clip-path:polygon(0_0,100%_0,82%_100%,14%_100%)]">
      모형
    </button>
    <button type="button" className="ml-[3px]">배치1</button>
    <span className="mx-[3px]">/</span>
    <button type="button">배치2</button>
    <span className="mx-[3px]">/</span>
  </div>
);

const CommandLine = () => (
  <div className="shrink-0 border-t border-[#a8a8a8] pt-[5px]">
    <div className="flex border-y-2 border-[#b8b8b8]">
      <div className="m-px ml-1 flex w-[5px] shrink-0 gap-px">
        <div className="w-px bg-[#c0c0c0]" />
        <div className="w-px bg-[#c0c0c0]" />
      </div>
      <div className="mr-[5px] flex-1 font-['Liberation_Mono','Noto_Sans_CJK_KR',monospace] text-[8px] text-[#222222]">
        <div className="flex border-b border-[#c8c8c8] bg-white">
          <div className="h-[18px] flex-1 overflow-hidden leading-[9px] whitespace-nowrap">
            <p>객체 선택:</p>
            <p>기준점 지정 또는 [변위(D)] &lt;변위&gt;: 두 번째 점 지정 또는 &lt;첫 번째 점을 변위로 사용&gt;:</p>
          </div>
          <div className="flex w-[9px] flex-col items-center justify-between bg-[#eeeeee] py-px">
            <div className="rotate-180"><Caret /></div>
            <Caret />
          </div>
        </div>
        <div className="flex h-[10px]">
          <label htmlFor="command" className="bg-white leading-[10px]">명령:</label>
          <input id="command" type="text" className="min-w-0 flex-1 bg-white leading-[10px] outline-none" />
          <div className="mr-[9px] flex w-[37px] items-center gap-[3px] px-1">
            <div className="rotate-90"><Caret /></div>
            <div className="h-[9px] w-2 border border-[#aaaaaa] bg-[#dedede]" />
            <div className="ml-auto -rotate-90"><Caret /></div>
          </div>
        </div>
      </div>
    </div>
  </div>
);

const statusToggles = [
  { label: '스냅', on: false },
  { label: '모눈', on: false },
  { label: '직교', on: false },
  { label: '극좌표', on: false },
  { label: 'OSNAP', on: true },
  { label: 'OTRACK', on: true },
  { label: 'DUCS', on: true },
  { label: 'DYN', on: false },
  { label: 'LWT', on: false },
  { label: '모형', on: true },
];

const StatusBar = () => (
  <div className="flex h-3 shrink-0 items-center bg-[#efedeb] pl-0.5 text-[7px] leading-[9px] text-[#222222]">
    <div className="w-[105px] border border-[#d0d0d0] border-t-[#a8a8a8] px-px text-[6px] whitespace-nowrap">
      -829,5788, -10410,9984, 0,0000
    </div>
    <div className="ml-1 flex gap-px">
      {statusToggles.map(({ label, on }, i) => (
        <button
          key={i}
          type="button"
          aria-pressed={on}
          className={`border whitespace-nowrap ${
            on ? 'border-[#d0d0d0] border-t-[#777777] border-l-[#777777] bg-[#f6f6f6]' : 'border-[#e8e8e8] border-r-[#b8b8b8] border-b-[#b8b8b8]'
          }`}
        >
          {label}
        </button>
      ))}
    </div>
    <div className="ml-auto flex items-center gap-px pr-0.5">
      <span className="whitespace-nowrap">주석 축척: 1:1</span>
      <Caret />
      <div className="ml-0.5 flex gap-px">
        <ToolButton name="AnnoVis" />
        <ToolButton name="AnnoAuto" />
        <ToolButton name="Padlock" />
        <ToolButton name="Tray" />
      </div>
      <Caret />
      <div className="ml-0.5 flex">
        <Icon name="CleanScreen" className="size-2.5" />
      </div>
    </div>
  </div>
);

const App: React.FC = () => {
  return (
    <div className="flex h-screen flex-col overflow-hidden border-r border-[#1f86e0] bg-[#efefef] font-['Liberation_Sans','Noto_Sans_CJK_KR',sans-serif]">
      <TitleBar />
      <MenuBar />
      <StandardBar />
      <LayerBar />
      <div className="flex min-h-0 flex-1">
        <SideBars />
        <main className="flex min-w-0 flex-1 flex-col pr-px">
          <div className="flex h-[14px] shrink-0 border-b-2 border-[#909090]">
            <button type="button" className="flex items-center gap-0.5 border-r border-[#909090] bg-linear-to-b from-[#e4e4e4] to-[#b8b8b8] px-px text-[6px] leading-[10px] font-bold text-[#1a1a9a]">
              <svg viewBox="0 0 9 9" className="size-[9px]" aria-hidden="true">
                <rect width="9" height="9" fill="#1414a8" />
                <path d="M1 2L4 5V8M8 1L5 5M2 1L5 2" stroke="#ffffff" fill="none" />
                <path d="M6 5L8 7" stroke="#e03030" />
              </svg>
              TLC-1.dwg
            </button>
          </div>
          <div className="min-h-0 flex-1">
            <ModelSpace />
          </div>
          <LayoutTabs />
        </main>
      </div>
      <CommandLine />
      <StatusBar />
    </div>
  );
};

export default App;
